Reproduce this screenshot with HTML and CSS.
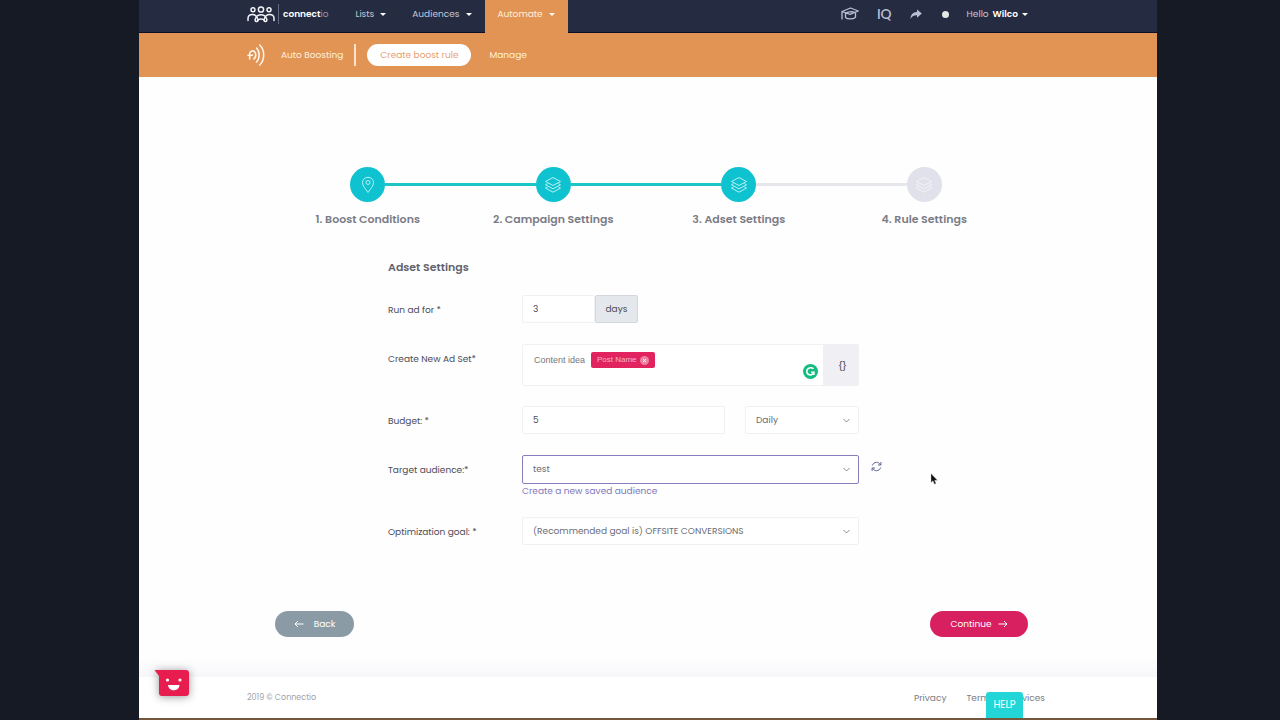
FILE: index.html
```html
<!DOCTYPE html>
<html lang="en">
<head>
    <meta charset="UTF-8">
    <meta name="viewport" content="width=device-width, initial-scale=1.0">
    <title>Connectio - Create boost rule</title>
    <link rel="stylesheet" href="styles.css">
</head>
<body>
    <svg class="defs" width="0" height="0" aria-hidden="true">
        <symbol id="layers" viewBox="0 0 18 18">
            <path d="M9 1.5L16.5 5.5L9 9.5L1.5 5.5Z"/>
            <path d="M3.6 7.6L1.5 8.8L9 12.8L16.5 8.8L14.4 7.6"/>
            <path d="M3.6 10.9L1.5 12.1L9 16.2L16.5 12.1L14.4 10.9"/>
        </symbol>
    </svg>
    <div class="page">
        <header class="topbar">
            <a class="logo" href="#" aria-label="connectio">
                <svg width="28" height="17" viewBox="0 0 28 17" fill="none" stroke="#f2f3f8" stroke-width="1.5" stroke-linecap="round">
                    <circle cx="6" cy="3.8" r="2"/>
                    <circle cx="14" cy="3.5" r="2.6"/>
                    <circle cx="22" cy="3.8" r="2"/>
                    <path d="M1 14.5V12.5C1 10 3 8.500 5.500 8.500C8 8.500 9.700 10 10.500 12.500C11.200 14.500 10.800 15.500 9.600 15.500C8 15.500 7.800 14 8.600 12.200C9.600 9.900 11.500 8.800 14 8.800C16.500 8.800 18.400 9.900 19.400 12.200C20.200 14 20 15.500 18.400 15.500C17.200 15.500 16.800 14.500 17.500 12.500C18.300 10 20 8.500 22.500 8.500C25 8.500 27 10 27 12.500V14.500"/>
                    <path d="M10.800 14.500C11.500 12.500 16.500 12.500 17.200 14.500"/>
                </svg>
                <span class="logo-name"><b>connect</b>io</span>
            </a>
            <nav class="main-nav">
                <a href="#">Lists <span class="caret"></span></a>
                <a href="#">Audiences <span class="caret"></span></a>
                <a href="#" class="active">Automate <span class="caret"></span></a>
            </nav>
            <div class="user-nav">
                <a href="#" aria-label="Academy">
                    <svg width="18" height="14" viewBox="0 0 18 14" fill="none" stroke="#b9bfd4" stroke-width="1.3" stroke-linejoin="round">
                        <path d="M1 4.500L9.500 1L17.300 4L9 7.300Z"/>
                        <path d="M1 4.500V12.500M4.500 6V10.500C6.500 12.500 12 12.500 14.500 10.200V5.500"/>
                        <path d="M4.500 6.500C6.500 4.500 11 4.300 14 5.500"/>
                    </svg>
                </a>
                <a href="#" class="iq">IQ</a>
                <a href="#" aria-label="Share">
                    <svg width="12" height="11" viewBox="0 0 12 11" fill="#b9bfd4">
                        <path d="M7 0.500L11.800 4.500L7 8.700V6.300C4 6.200 2 7 0.600 10C0.500 6 2.800 3.200 7 3Z"/>
                    </svg>
                </a>
                <span class="dot"></span>
                <a href="#" class="hello">Hello <b>Wilco</b> <span class="caret"></span></a>
            </div>
        </header>

        <nav class="subnav">
            <svg width="18" height="24" viewBox="0 0 18 24" fill="none" stroke="#fff3e6" stroke-width="1.6" stroke-linecap="round">
                <path d="M2.700 16V10.500C2.700 8 6.500 6.700 8 9.300C9.300 11.800 8.500 14.500 6.800 16M1 12.200H5.500"/>
                <path d="M9.500 5C13 8.500 13 15.500 9.500 19"/>
                <path d="M12.700 2C18 7 18 17 12.700 22"/>
            </svg>
            <span class="subnav-title">Auto Boosting</span>
            <a href="#" class="pill">Create boost rule</a>
            <a href="#">Manage</a>
        </nav>

        <main>
            <ol class="steps">
                <li class="done">
                    <div class="track">
                        <span class="bar"></span>
                        <span class="circle">
                            <svg width="18" height="18" viewBox="0 0 18 18">
                                <path d="M9 16.500C6.500 12.800 3.500 9.800 3.500 6.500C3.500 3.500 6 1.300 9 1.300C12 1.300 14.500 3.500 14.500 6.500C14.500 9.800 11.500 12.800 9 16.500Z"/>
                                <circle cx="9" cy="6.500" r="2"/>
                            </svg>
                        </span>
                        <span class="bar"></span>
                    </div>
                    1. Boost Conditions
                </li>
                <li class="done">
                    <div class="track">
                        <span class="bar"></span>
                        <span class="circle"><svg width="18" height="18"><use href="#layers"/></svg></span>
                        <span class="bar"></span>
                    </div>
                    2. Campaign Settings
                </li>
                <li class="done current">
                    <div class="track">
                        <span class="bar"></span>
                        <span class="circle"><svg width="18" height="18"><use href="#layers"/></svg></span>
                        <span class="bar"></span>
                    </div>
                    3. Adset Settings
                </li>
                <li>
                    <div class="track">
                        <span class="bar"></span>
                        <span class="circle"><svg width="18" height="18"><use href="#layers"/></svg></span>
                        <span class="bar"></span>
                    </div>
                    4. Rule Settings
                </li>
            </ol>

            <form id="adset-form">
                <h1>Adset Settings</h1>

                <div class="row">
                    <label for="days">Run ad for *</label>
                    <div class="field">
                        <input type="text" id="days" class="days" value="3">
                        <span class="addon">days</span>
                    </div>
                </div>

                <div class="row">
                    <label for="adset-name">Create New Ad Set*</label>
                    <div class="field name-box">
                        <input type="text" id="adset-name" value="Content idea">
                        <span class="tag">Post Name
                            <button type="button" aria-label="Remove Post Name">
                                <svg width="9" height="9" viewBox="0 0 9 9">
                                    <circle cx="4.500" cy="4.500" r="4.500" fill="#ef7fa3"/>
                                    <path d="M3 3L6 6M6 3L3 6" stroke="#fff"/>
                                </svg>
                            </button>
                        </span>
                        <svg class="checker" width="15" height="15" viewBox="0 0 15 15" fill="none">
                            <circle cx="7.500" cy="7.500" r="7.500" fill="#13bd80"/>
                            <path d="M10.500 4.700C8.300 2.700 3.800 3.700 3.800 7.500C3.800 11.300 9.200 12.400 10.900 8.300H8M10.900 8.300V11" stroke="#fff" stroke-width="1.5"/>
                        </svg>
                        <button type="button" class="vars">{}</button>
                    </div>
                </div>

                <div class="row">
                    <label for="budget">Budget: *</label>
                    <div class="field budget">
                        <input type="text" id="budget" value="5">
                        <select aria-label="Budget period">
                            <option>Daily</option>
                            <option>Lifetime</option>
                        </select>
                    </div>
                </div>

                <div class="row">
                    <label for="audience">Target audience:*</label>
                    <div class="field audience">
                        <select id="audience" class="focused">
                            <option>test</option>
                        </select>
                        <a href="#">Create a new saved audience</a>
                    </div>
                    <button type="button" class="refresh" aria-label="Refresh audiences">
                        <svg width="11" height="11" viewBox="0 0 11 11" fill="none" stroke="#5b6794">
                            <path d="M1.300 4.500C2 2.500 3.500 1.300 5.500 1.300C7.300 1.300 8.500 2.200 9.500 3.800M9.900 1V4H7"/>
                            <path d="M9.700 6.500C9 8.500 7.500 9.700 5.500 9.700C3.700 9.700 2.500 8.800 1.500 7.200M1.100 10V7H4"/>
                        </svg>
                    </button>
                </div>

                <div class="row">
                    <label for="goal">Optimization goal: *</label>
                    <div class="field">
                        <select id="goal">
                            <option>(Recommended goal is) OFFSITE CONVERSIONS</option>
                        </select>
                    </div>
                </div>
            </form>

            <div class="actions">
                <button type="button" class="btn back">
                    <svg width="10" height="8" viewBox="0 0 10 8"><path d="M9.500 4H1M4 1L1 4L4 7"/></svg>
                    Back
                </button>
                <button type="submit" form="adset-form" class="btn continue">
                    Continue
                    <svg width="10" height="8" viewBox="0 0 10 8"><path d="M0.500 4H9M6 1L9 4L6 7"/></svg>
                </button>
            </div>
        </main>

        <footer>
            <span>2019 © Connectio</span>
            <div class="links">
                <a href="#">Privacy</a>
                <a href="#">Terms of Services</a>
            </div>
        </footer>

        <button type="button" class="chat" aria-label="Open chat">
            <svg width="36" height="28" viewBox="0 0 36 28">
                <path d="M0.500 1H32Q35 1 35 4V24Q35 27 32 27H8Q5 27 5 24V7Z" fill="#e81d4f"/>
                <circle cx="13.500" cy="11" r="1.600" fill="#fff"/>
                <circle cx="26" cy="11" r="1.600" fill="#fff"/>
                <path d="M14 16H25.500C25 23 14.500 23 14 16Z" fill="#fff"/>
            </svg>
        </button>
        <button type="button" class="help">HELP</button>
        <svg class="pointer" width="8" height="12" viewBox="0 0 8 12">
            <path d="M1 0.500V9.500L3 7.800L4.500 11.300L6 10.600L4.600 7.300H7.400Z" fill="#111" stroke="#ccc" stroke-width="0.4"/>
        </svg>
    </div>
</body>
</html>
```
FILE: styles.css
```css
* {
    box-sizing: border-box;
}

body {
    margin: 0;
    background-color: #161a25;
    font-family: Poppins, Inter, sans-serif;
    font-size: 9px;
    line-height: 14px;
    color: #4b4c57;
}

a {
    color: inherit;
    text-decoration: none;
}

svg {
    display: block;
    flex: none;
}

button, input, select {
    font: inherit;
    color: inherit;
}

button {
    padding: 0;
    border: none;
    background: none;
    cursor: pointer;
}

.defs {
    position: absolute;
}

.page {
    position: relative;
    display: flex;
    flex-direction: column;
    min-height: 100vh;
    margin: 0 123px 0 139px;
    background-color: #fefefe;
    border-bottom: 2px solid #76583f;
}

/* top bar */
.topbar {
    display: flex;
    height: 33px;
    padding: 0 129px 0 108px;
    background-color: #252b41;
    border-bottom: 1px solid #0c1027;
    color: #c3c7d8;
}

.logo {
    display: flex;
    align-items: center;
    gap: 3px;
    height: 28px;
    margin-right: 14px;
}

.logo-name {
    padding-left: 4px;
    border-left: 1px solid #646a80;
    line-height: 20px;
    color: #9499ad;
}

.logo-name b {
    font-weight: 600;
    color: #fff;
}

.main-nav {
    display: flex;
    height: 33px;
}

.main-nav a {
    display: flex;
    align-items: center;
    gap: 6px;
    padding: 0 13px 5px;
}

.main-nav .active {
    background-color: #e29454;
    color: #fff0df;
}

.caret {
    border: 3px solid transparent;
    border-top-color: #fff;
    border-bottom: 0;
}

.user-nav {
    display: flex;
    align-items: center;
    gap: 18px;
    height: 28px;
    margin-left: auto;
}

.iq {
    font-size: 14px;
    font-weight: 500;
    color: #b9bfd4;
}

.dot {
    width: 7px;
    height: 7px;
    margin-left: 2px;
    border-radius: 50%;
    background-color: #e3e8e8;
}

.hello {
    display: flex;
    align-items: center;
    gap: 4px;
}

.hello b {
    font-weight: 600;
    color: #fff;
}

.subnav {
    display: flex;
    align-items: center;
    height: 44px;
    padding-left: 108px;
    background-color: #e29454;
    color: #fff0df;
}

.subnav-title {
    margin-left: 16px;
    padding-right: 11px;
    border-right: 2px solid #fbe3cc;
    line-height: 22px;
}

.pill {
    margin: 0 18px 0 11px;
    padding: 0 13px;
    border-radius: 11px;
    background-color: #fff;
    line-height: 22px;
    color: #e5a172;
}

/* wizard */
main {
    flex: 1;
    padding: 90px 129px 20px 136px;
    background: linear-gradient(#f9f8fb00, #f7f6fa) bottom / 100% 20px no-repeat;
}

.steps {
    display: grid;
    grid-template-columns: repeat(4, 1fr);
    margin: 0 11px 0 0;
    padding: 0;
    list-style: none;
    text-align: center;
    font-size: 11px;
    font-weight: 600;
    line-height: 16px;
    color: #7b7c86;
}

.track {
    display: flex;
    align-items: center;
    margin-bottom: 9px;
}

.bar {
    flex: 1;
    height: 3px;
    background-color: #e6e7ea;
}

.done .bar {
    background-color: #1cc6c6;
}

.current .bar:last-child {
    background-color: #e6e7ea;
}

.steps li:first-child .bar:first-child,
.steps li:last-child .bar:last-child {
    visibility: hidden;
}

.circle {
    display: flex;
    align-items: center;
    justify-content: center;
    width: 35px;
    height: 35px;
    border-radius: 50%;
    background-color: #e0e1ea;
}

.done .circle {
    background-color: #0fc2d0;
}

.circle svg {
    fill: none;
    stroke: #f3f3f8;
    stroke-width: 1px;
}

.done .circle svg {
    stroke: #b5f3f5;
}

/* form */
form {
    display: flex;
    flex-direction: column;
    gap: 19px;
    margin: 32px 0 0 113px;
}

h1 {
    margin: 0;
    font-size: 11px;
    font-weight: 600;
    line-height: 17px;
    color: #62636d;
}

.row {
    display: grid;
    grid-template-columns: 134px minmax(0, 337px) 11px;
    align-items: start;
}

.row label {
    line-height: 30px;
}

.field {
    display: flex;
}

.field input,
.field select {
    width: 100%;
    min-width: 0;
    height: 28px;
    padding: 0 10px;
    border: 1px solid #f1f1f5;
    border-radius: 2px;
    background-color: #fff;
}

.field select {
    appearance: none;
    background: #fff url("data:image/svg+xml,%3Csvg xmlns='http://www.w3.org/2000/svg' width='7' height='5' fill='none' stroke='%238a8b95'%3E%3Cpath d='M.5 1L3.5 4L6.5 1'/%3E%3C/svg%3E") right 8px center no-repeat;
    color: #6c6d76;
}

.field .days {
    width: 73px;
}

.addon {
    width: 43px;
    border: 1px solid #d3d7de;
    border-radius: 2px;
    background-color: #e4e8ed;
    line-height: 26px;
    text-align: center;
}

.name-box {
    height: 42px;
    margin-bottom: 1px;
    padding-left: 11px;
    border: 1px solid #f1f1f5;
    border-radius: 2px;
    background-color: #fff;
}

.field.name-box input {
    width: 57px;
    height: 30px;
    padding: 0;
    border: none;
    font-family: "Liberation Sans", sans-serif;
    color: #777;
}

.tag {
    display: flex;
    align-items: center;
    gap: 3px;
    height: 16px;
    margin-top: 7px;
    padding: 0 6px;
    border-radius: 2px;
    background-color: #e1245f;
    font-family: "Liberation Sans", sans-serif;
    font-size: 8px;
    color: #f8b4ca;
}

.checker {
    align-self: flex-end;
    margin: 0 5px 6px auto;
}

.vars {
    width: 35px;
    padding-left: 4px;
    background-color: #f0f0f4;
    font-family: "Liberation Sans", sans-serif;
    font-size: 11px;
}

.budget {
    display: grid;
    grid-template-columns: 203fr 114fr;
    gap: 20px;
}

.audience {
    flex-direction: column;
    color: #7f79bd;
}

.field .focused {
    height: 29px;
    padding-bottom: 2px;
    border-color: #8580bd;
}

.refresh {
    margin: 6px 0 0 12px;
}

.actions {
    display: flex;
    justify-content: space-between;
    margin-top: 64px;
}

.btn {
    display: flex;
    align-items: center;
    justify-content: center;
    height: 26px;
    border-radius: 13px;
    color: #fff;
}

.btn svg {
    fill: none;
    stroke: #fff;
}

.back {
    gap: 10px;
    width: 79px;
    background-color: #8a9ba5;
}

.continue {
    gap: 6px;
    width: 98px;
    background-color: #d81f5f;
}

footer {
    display: flex;
    align-items: center;
    justify-content: space-between;
    height: 41px;
    padding: 0 112px 0 108px;
    background-color: #fff;
    font-size: 8px;
    color: #a0a1a8;
}

.links {
    display: flex;
    gap: 20px;
    font-size: 9px;
    color: #7c7d85;
}

/* floating widgets */
.chat {
    position: absolute;
    left: 15px;
    bottom: 21px;
    filter: drop-shadow(0 1px 4px rgba(0, 0, 0, 0.4));
}

.help {
    position: absolute;
    right: 134px;
    bottom: 0;
    width: 37px;
    height: 26px;
    border-radius: 3px 3px 0 0;
    background-color: #22d6d8;
    font-size: 10px;
    color: #fff;
}

.pointer {
    position: absolute;
    left: 791px;
    top: 473px;
}
```
